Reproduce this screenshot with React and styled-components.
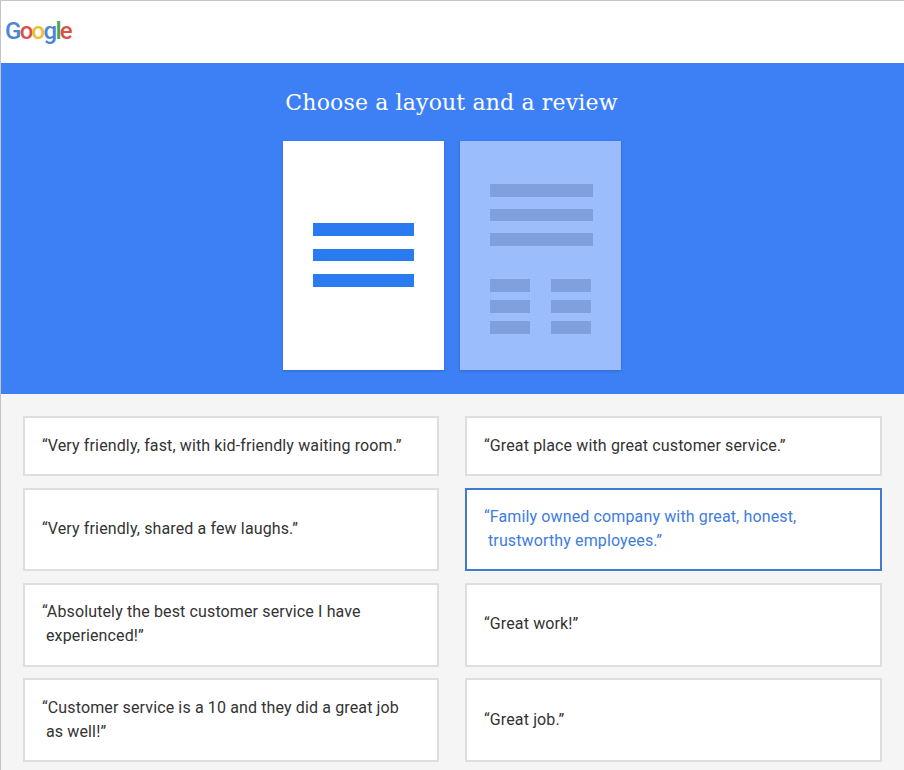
import React from "react";
import styled, { createGlobalStyle } from "styled-components";

const GlobalStyle = createGlobalStyle`
  html, body {
    margin: 0;
    padding: 0;
    background: #f5f5f5;
  }
  * {
    box-sizing: border-box;
  }
`;

const reviews = [
  { id: 1, text: "“Very friendly, fast, with kid-friendly waiting room.”" },
  { id: 2, text: "“Great place with great customer service.”" },
  { id: 3, text: "“Very friendly, shared a few laughs.”" },
  { id: 4, text: "“Family owned company with great, honest, trustworthy employees.”", selected: true },
  { id: 5, text: "“Absolutely the best customer service I have experienced!”" },
  { id: 6, text: "“Great work!”" },
  { id: 7, text: "“Customer service is a 10 and they did a great job as well!”" },
  { id: 8, text: "“Great job.”" },
];

const logoLetters = [
  { id: 1, char: "G", color: "#4a86d4" },
  { id: 2, char: "o", color: "#dc5046" },
  { id: 3, char: "o", color: "#f0bd35" },
  { id: 4, char: "g", color: "#4a86d4" },
  { id: 5, char: "l", color: "#45a35c" },
  { id: 6, char: "e", color: "#dc5046" },
];

const App = () => {
  return (
    <Page>
      <GlobalStyle />
      <Header>
        <Logo>
          {logoLetters.map((letter) => (
            <span key={letter.id} style={{ color: letter.color }}>
              {letter.char}
            </span>
          ))}
        </Logo>
      </Header>
      <Hero>
        <Title>Choose a layout and a review</Title>
        <Layouts>
          <LayoutCard>
            <BarStack>
              <Bar />
              <Bar />
              <Bar />
            </BarStack>
          </LayoutCard>
          <LayoutCard $muted>
            <MutedBars>
              <MutedBar />
              <MutedBar />
              <MutedBar />
            </MutedBars>
            <MiniGrid>
              {[1, 2, 3, 4, 5, 6].map((n) => (
                <MiniBar key={n} />
              ))}
            </MiniGrid>
          </LayoutCard>
        </Layouts>
      </Hero>
      <Reviews>
        {reviews.map((review) => (
          <Review key={review.id} $selected={review.selected}>
            <ReviewText>{review.text}</ReviewText>
          </Review>
        ))}
      </Reviews>
    </Page>
  );
};

const Page = styled.div`
  width: 904px;
  height: 770px;
  overflow: hidden;
  background: #f5f5f5;
  border-top: 1px solid #c4c4c4;
  border-left: 1px solid #c4c4c4;
`;

const Header = styled.header`
  height: 62px;
  background: #fff;
  display: flex;
  align-items: center;
  padding-left: 4px;
`;

const Logo = styled.div`
  font-family: Roboto, sans-serif;
  font-size: 24px;
  font-weight: 500;
  letter-spacing: -1.7px;
  line-height: 1;
  margin-bottom: 3px;
`;

const Hero = styled.section`
  height: 331px;
  background: #3d80f6;
  display: flex;
  flex-direction: column;
  align-items: center;
  padding: 25px 2px 0 0;
`;

const Title = styled.h1`
  margin: 0 0 23px;
  color: #fff;
  font-family: "DejaVu Serif", serif;
  font-size: 22px;
  font-weight: 400;
  line-height: 30px;
  letter-spacing: 0.15px;
`;

const Layouts = styled.div`
  display: flex;
  gap: 16px;
`;

const LayoutCard = styled.div`
  width: 161px;
  height: 229px;
  background: ${(p) => (p.$muted ? "#9bbdfb" : "#fff")};
  box-shadow: 0 1px 3px rgba(20, 50, 120, 0.3);
  display: flex;
  flex-direction: column;
  padding: ${(p) => (p.$muted ? "43px 28px 0 30px" : "82px 30px 0")};
`;

const BarStack = styled.div`
  display: flex;
  flex-direction: column;
  gap: 13px;
`;

const Bar = styled.div`
  height: 12.5px;
  background: #2a7bf0;
`;

const MutedBars = styled.div`
  display: flex;
  flex-direction: column;
  gap: 12px;
`;

const MutedBar = styled.div`
  height: 12.5px;
  background: #7f9fdd;
`;

const MiniGrid = styled.div`
  margin-top: 33px;
  display: grid;
  grid-template-columns: 40px 40px;
  gap: 8px 21px;
`;

const MiniBar = styled.div`
  height: 13px;
  background: #7f9fdd;
`;

const Reviews = styled.section`
  display: grid;
  grid-template-columns: 416px 417px;
  grid-template-rows: 60px 83.5px 84px 84px;
  column-gap: 26px;
  row-gap: 11.5px;
  padding: 22px 0 0 22px;
`;

const Review = styled.div`
  background: #fff;
  border: 2px solid ${(p) => (p.$selected ? "#3f7cd0" : "#dedede")};
  color: ${(p) => (p.$selected ? "#3d7ce0" : "#333333")};
  display: flex;
  align-items: center;
  padding: 0 30px 0 21px;
`;

const ReviewText = styled.p`
  margin: 0;
  font-family: Roboto, sans-serif;
  font-size: 16px;
  line-height: 24px;
  letter-spacing: 0.13px;
  text-indent: -4px;
  padding-bottom: 1px;
`;

export default App;
